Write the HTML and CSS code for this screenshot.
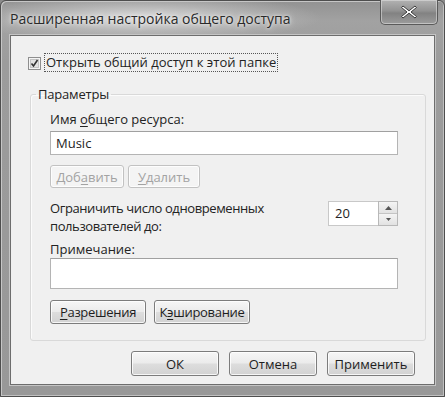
FILE: index.html
```html
<!DOCTYPE html>
<html lang="ru">
<head>
<meta charset="utf-8">
<link rel="stylesheet" href="styles.css">
</head>
<body>
<div class="window">
  <div class="titlebar">
    <div class="title">Расширенная настройка общего доступа</div>
    <div class="close">
      <svg width="16" height="14" viewBox="0 0 16 14"><path d="M2 1 L8 5.8 L14 1 L15.5 2.5 L10 7 L15.5 11.5 L14 13 L8 8.2 L2 13 L0.5 11.5 L6 7 L0.5 2.5 Z" fill="#fff" stroke="#3c3c3c" stroke-width="1"/></svg>
    </div>
  </div>
  <div class="client">
    <div class="check-row">
      <span class="checkbox">
        <svg width="13" height="13" viewBox="0 0 13 13"><rect x="0.5" y="0.5" width="12" height="12" fill="#f4f4f4" stroke="#8e8e8e"/><rect x="2.5" y="2.5" width="8" height="8" fill="#e2e2e2" stroke="#c4c4c4"/><path d="M3.5 6.5 L5.5 9 L9.5 3" fill="none" stroke="#333" stroke-width="1.6"/></svg>
      </span>
      <span class="focus">Открыть общий доступ к этой папке</span>
    </div>
    <fieldset class="group">
      <legend>Параметры</legend>
      <div class="group-body">
        <div class="label">Имя <u>о</u>бщего ресурса:</div>
        <div class="input name-input">Music</div>
        <div class="btn-row">
          <div class="btn disabled add">Доб<u>а</u>вить</div>
          <div class="btn disabled del"><u>У</u>далить</div>
        </div>
        <div class="limit-row">
          <div class="limit-text">Ограничить число одновременных<br>пользователей до:</div>
          <div class="spinner">
            <div class="spin-input">20</div>
            <div class="spin-buttons">
              <div class="spin-btn"><svg width="7" height="4" viewBox="0 0 7 4"><path d="M0 4 L3.5 0 L7 4 Z" fill="#555"/></svg></div>
              <div class="spin-btn"><svg width="5" height="3" viewBox="0 0 5 3"><path d="M0 0 L2.5 3 L5 0 Z" fill="#555"/></svg></div>
            </div>
          </div>
        </div>
        <div class="label note-label">Примечание:</div>
        <div class="input note-input"></div>
        <div class="btn-row perm-row">
          <div class="btn perm"><u>Р</u>азрешения</div>
          <div class="btn cache">К<u>э</u>ширование</div>
        </div>
      </div>
    </fieldset>
    <div class="footer">
      <div class="btn dlg">ОК</div>
      <div class="btn dlg">Отмена</div>
      <div class="btn dlg">Применить</div>
    </div>
  </div>
</div>
</body>
</html>
```

FILE: styles.css
```css
* { box-sizing: border-box; }
html, body { margin: 0; padding: 0; }
body {
  width: 445px;
  height: 397px;
  overflow: hidden;
  background: #8a8a8a;
  font-family: "Open Sans", "Noto Sans", sans-serif;
  font-size: 13px;
  color: #232323;
}
.window {
  width: 445px;
  height: 397px;
  display: flex;
  flex-direction: column;
  background:
    radial-gradient(ellipse 180px 24px at 140px 17px, rgba(225,225,225,0.9) 0%, rgba(200,200,200,0.55) 55%, rgba(180,180,180,0) 100%),
    linear-gradient(to bottom, #929292 0px, #a2a2a2 20px, #9c9c9c 60px, #989898 100%);
  border: 1px solid #4e4e4e;
  border-radius: 6px 6px 0 0;
  box-shadow: inset 1px 1px 0 #c6c6c6, inset -1px -1px 0 #c0c0c0;
}
.titlebar {
  height: 34px;
  display: flex;
  align-items: flex-start;
  padding-left: 9px;
}
.title {
  font-size: 14px;
  line-height: 20px;
  margin-top: 8px;
  color: #2a2a2a;
  text-shadow: 0 0 6px #eeeeee, 0 0 3px #eeeeee;
}
.close {
  margin-left: auto;
  margin-right: 6px;
  margin-top: -1px;
  width: 58px;
  height: 25px;
  border: 1px solid #5a5a5a;
  border-top: none;
  border-radius: 0 0 5px 5px;
  background: linear-gradient(to bottom, #b2b2b2 0%, #929292 45%, #828282 55%, #9c9c9c 100%);
  box-shadow: inset 0 0 0 1px rgba(225,225,225,0.55);
  display: flex;
  align-items: center;
  justify-content: center;
}
.client {
  margin: 0 9px 11px 9px;
  flex: 1;
  background: #f0f0f0;
  border: 1px solid #6d6d6d;
  box-shadow: 0 0 0 1px #c4c4c4;
  display: flex;
  flex-direction: column;
  padding: 17px 0 0 17px;
}
.check-row {
  display: flex;
  align-items: center;
  height: 19px;
}
.checkbox { width: 13px; height: 13px; display: flex; margin-top: 1px; }
.focus {
  margin-left: 3px;
  padding: 0 1px;
  border: 1px dotted #555;
  line-height: 17px;
}
.group {
  margin: 14px 0 0 2px;
  padding: 0;
  width: 396px;
  min-width: 0;
  border: 1px solid #d9d9d9;
  border-radius: 3px;
  box-shadow: inset 1px 1px 0 #fbfbfb;
}
.group legend {
  padding: 0 2px;
  margin-left: 5px;
  line-height: 16px;
  letter-spacing: -0.2px;
}
.group-body {
  padding: 9px 0 16px 19px;
  display: flex;
  flex-direction: column;
}
.label { line-height: 16px; }
.input {
  background: #fff;
  border: 1px solid #b4b4b4;
  border-top-color: #a0a0a0;
  width: 348px;
}
.name-input {
  margin-top: 4px;
  height: 24px;
  padding-left: 5px;
  line-height: 22px;
}
.btn-row { display: flex; gap: 4px; margin-top: 10px; }
.btn {
  height: 23px;
  display: flex;
  align-items: center;
  justify-content: center;
  border: 1px solid #7c7c7c;
  border-radius: 3px;
  background: linear-gradient(to bottom, #f6f6f6 0%, #ebebeb 48%, #dddddd 52%, #d2d2d2 100%);
  box-shadow: inset 0 0 0 1px rgba(255,255,255,0.8);
  color: #1e1e1e;
}
.btn.disabled {
  border-color: #c2c2c2;
  background: #f4f4f4;
  color: #a3a3a3;
}
.add { width: 74px; }
.del { width: 72px; }
.limit-row {
  display: flex;
  margin-top: 11px;
  align-items: flex-start;
}
.limit-text { line-height: 18px; width: 278px; letter-spacing: -0.4px; }
.spinner { display: flex; margin-top: 2px; }
.spin-input {
  width: 50px;
  height: 25px;
  background: #fff;
  border: 1px solid #c8c8c8;
  border-right: none;
  padding-left: 6px;
  line-height: 23px;
}
.spin-buttons {
  width: 20px;
  height: 25px;
  display: flex;
  flex-direction: column;
  border: 1px solid #b8b8b8;
}
.spin-btn {
  flex: 1;
  display: flex;
  align-items: center;
  justify-content: center;
  background: linear-gradient(to bottom, #f4f4f4, #e2e2e2);
  border-bottom: 1px solid #c4c4c4;
}
.spin-btn:last-child { border-bottom: none; }
.note-label { margin-top: 6px; }
.note-input { height: 31px; margin-top: 1px; }
.perm-row { gap: 8px; margin-top: 11px; }
.perm { width: 96px; height: 24px; letter-spacing: -0.3px; }
.cache { width: 96px; height: 24px; letter-spacing: -0.3px; }
.footer {
  display: flex;
  justify-content: flex-end;
  gap: 10px;
  margin-top: 10px;
  margin-right: 19px;
}
.dlg { width: 88px; height: 25px; }
u { text-decoration-thickness: 1px; text-underline-offset: 2px; }
```
